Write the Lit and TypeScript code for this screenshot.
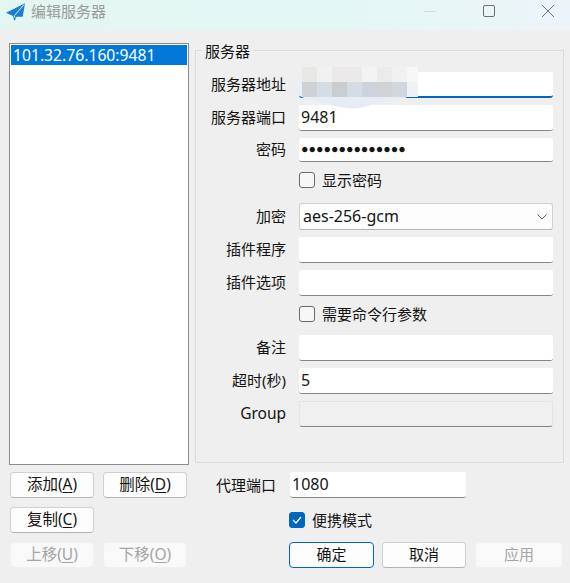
import { LitElement, html, css, svg } from 'lit';
import { customElement } from 'lit/decorators.js';

const mosaicTop = ['#e8e8e7', '#f0f1f0', '#ece9e8', '#ebeaea', '#f3f3f3', '#ebebeb', '#f1f1f1', '#f7f7f7'];
const mosaicBottom = ['#ced2d4', '#d4dce6', '#c8cdcf', '#d4dde6', '#cdd3da', '#cfd3d6', '#cfd6de', '#eef2f6'];

@customElement('app-root')
export class AppRoot extends LitElement {
  static styles = css`
    :host {
      display: block;
      width: 570px;
      height: 583px;
      overflow: hidden;
      background: #efefef;
      color: #141414;
      font-family: "Noto Sans", "Noto Sans CJK SC", sans-serif;
      font-size: 15px;
    }
    .titlebar {
      height: 30px;
      box-sizing: border-box;
      display: flex;
      align-items: center;
      padding: 0 0 9px 6px;
      background: linear-gradient(90deg, #e3f6f1 0%, #e3f7f5 60%, #edf4f9 100%);
    }
    .titlebar .logo { width: 20px; height: 20px; flex: none; }
    .titlebar .title {
      margin-left: 5px;
      color: #9a9a9a;
      flex: 1;
      line-height: 20px;
    }
    .winbtn { width: 44px; margin-left: 15px; display: flex; justify-content: center; }
    .winbtn svg { width: 14px; height: 14px; }
    .main {
      display: grid;
      grid-template-columns: 180px 369px;
      column-gap: 6px;
      padding: 13px 0 0 9px;
    }
    .list {
      height: 422px;
      box-sizing: border-box;
      border: 1px solid #8b8b90;
      background: #fff;
      padding: 1px;
    }
    .list .item {
      height: 20px;
      line-height: 20px;
      padding-left: 2px;
      background: #0078d7;
      color: #fff;
      font-size: 15.7px;
    }
    fieldset {
      position: relative;
      margin: 7px 0 0 0;
      padding: 21px 10px 0 0;
      height: 413px;
      box-sizing: border-box;
      border: 1px solid #dcdcdc;
      background: #efefef;
    }
    .legend {
      position: absolute;
      left: 6px;
      top: -9px;
      padding: 0 3px;
      line-height: 18px;
      background: #efefef;
    }
    .form {
      display: grid;
      grid-template-columns: 90px 254px;
      column-gap: 13px;
      row-gap: 7px;
      align-items: center;
    }
    .label { text-align: right; line-height: 20px; padding-bottom: 2px; white-space: nowrap; }
    .label.latin { font-size: 15.5px; }
    .input {
      height: 26px;
      box-sizing: border-box;
      background: #fff;
      border-bottom: 1px solid #858585;
      border-radius: 2px 2px 3px 3px;
      line-height: 24px;
      padding-left: 2px;
      font-size: 16px;
      overflow: hidden;
      white-space: nowrap;
    }
    .input.focus { border-bottom: 2px solid #0067c0; }
    .input.disabled { background: #f0f0f0; border: 1px solid #e4e4e4; border-bottom-color: #858585; }
    .input.pw { height: 24px; line-height: 23px; font-size: 12.4px; font-family: "Liberation Sans", sans-serif; }
    .combo {
      height: 27px;
      box-sizing: border-box;
      display: flex;
      align-items: center;
      justify-content: space-between;
      background: #fdfdfd;
      border: 1px solid #d0d0d0;
      border-bottom-color: #b4b4b4;
      border-radius: 3px;
      padding: 0 5px 2px 3px;
      font-size: 16px;
    }
    .combo svg { width: 10px; height: 6px; margin-top: 2px; }
    .gap-cb-a { margin: 3px 0 8px; }
    .gap-cb-b { margin: 3px 0 6px; }
    .check { display: flex; align-items: center; gap: 7px; line-height: 16px; height: 16px; }
    .box {
      width: 16px;
      height: 16px;
      box-sizing: border-box;
      border: 1px solid #6b6b6b;
      border-radius: 3px;
      background: #f7f7f7;
      flex: none;
      display: flex;
      align-items: center;
      justify-content: center;
    }
    .box.on { background: #0067c0; border-color: #0067c0; }
    .box svg { width: 10px; height: 8px; }
    .mosaic {
      position: absolute;
      left: 106px;
      top: 16px;
      display: grid;
      grid-template-columns: repeat(7, 15px) 11px;
      grid-auto-rows: 15px;
      filter: blur(0.4px);
    }
    .halo {
      position: absolute;
      left: 91px;
      top: 10px;
      width: 135px;
      height: 52px;
    }
    .bottom {
      display: grid;
      grid-template-columns: 180px 369px;
      column-gap: 6px;
      padding: 7px 0 0 9px;
    }
    .left-btns {
      display: grid;
      grid-template-columns: 84px 84px;
      column-gap: 9px;
      grid-auto-rows: 26px;
      row-gap: 9px;
      padding-left: 1px;
    }
    .left-btns button { font-size: 15.5px; }
    button {
      font: inherit;
      color: inherit;
      height: 26px;
      line-height: 22px;
      padding: 0 0 2px;
      box-sizing: border-box;
      background: #fdfdfd;
      border: 1px solid #d0d0d0;
      border-bottom-color: #b4b4b4;
      border-radius: 4px;
    }
    button[disabled] { background: #f9f9f9; border-color: #f0f0f0; color: #a4a4a4; }
    button.primary { border: 1px solid #0067c0; }
    u { text-underline-offset: 2px; }
    .right { display: flex; flex-direction: column; }
    .proxy { display: flex; align-items: center; height: 26px; padding-left: 21px; }
    .proxy span { padding-bottom: 2px; }
    .proxy .input { width: 176px; margin-left: 14px; }
    .portable { margin: 14px 0 0 94px; }
    .actions { display: flex; padding: 14px 0 0 94px; }
    .actions button { flex: none; }
    .actions button:nth-child(1) { width: 85px; margin-right: 8px; }
    .actions button:nth-child(2) { width: 84px; margin-right: 9px; }
    .actions button:nth-child(3) { width: 88px; }
  `;

  private label(text: string) {
    return html`<div class="label">${text}</div>`;
  }

  render() {
    const logo = svg`
      <path d="M19 2.3 L0 11.7 L7 15 L8.3 20 L10.7 15.7 L16.7 15.7 Z" fill="#1c7fd0"/>
      <path d="M18 3.6 L8.6 14.4 L8.8 17" stroke="#e3f6f1" stroke-width="0.9" fill="none"/>`;
    return html`
      <div class="titlebar">
        <svg class="logo" viewBox="0 0 20 20">${logo}</svg>
        <div class="title">编辑服务器</div>
        <div class="winbtn"><svg viewBox="0 0 14 14"><path d="M1 7.5H13" stroke="#d0dcdc" fill="none"/></svg></div>
        <div class="winbtn"><svg viewBox="0 0 14 14"><rect x="1.5" y="1.5" width="11" height="11" rx="1.5" stroke="#6f6f6f" fill="none"/></svg></div>
        <div class="winbtn"><svg viewBox="0 0 14 14"><path d="M1 1L13 13M13 1L1 13" stroke="#6f6f6f" fill="none"/></svg></div>
      </div>
      <div class="main">
        <div class="list"><div class="item">101.32.76.160:9481</div></div>
        <fieldset>
          <div class="legend">服务器</div>
          <div class="form">
            ${this.label('服务器地址')}<div class="input focus"></div>
            ${this.label('服务器端口')}<div class="input">9481</div>
            ${this.label('密码')}<div class="input pw">●●●●●●●●●●●●●●</div>
            <div></div><div class="check gap-cb-a"><span class="box"></span>显示密码</div>
            ${this.label('加密')}
            <div class="combo">aes-256-gcm
              <svg viewBox="0 0 10 6"><path d="M0.5 0.5L5 5L9.5 0.5" stroke="#5a5a5a" fill="none"/></svg>
            </div>
            ${this.label('插件程序')}<div class="input"></div>
            ${this.label('插件选项')}<div class="input"></div>
            <div></div><div class="check gap-cb-b"><span class="box"></span>需要命令行参数</div>
            ${this.label('备注')}<div class="input"></div>
            ${this.label('超时(秒)')}<div class="input">5</div>
            <div class="label latin">Group</div><div class="input disabled"></div>
          </div>
          <svg class="halo" viewBox="287 61 135 52">
            <defs>
              <linearGradient id="haloFill" x1="0" y1="0" x2="0" y2="1">
                <stop offset="0" stop-color="#f0f0f0"/>
                <stop offset="0.5" stop-color="#eaeff4"/>
                <stop offset="1" stop-color="#e4ebf3"/>
              </linearGradient>
            </defs>
            <path fill="url(#haloFill)" d="M300 66 C292 72 290 84 293 90 C296 97 312 101 330 104 C340 108 358 112 375 103 C388 101 404 101 410 95 C417 90 420 82 416 75 C413 70 409 66 404 66 Z"/>
          </svg>
          <div class="mosaic">
            ${mosaicTop.map((c) => html`<div style="background:${c}"></div>`)}
            ${mosaicBottom.map((c) => html`<div style="background:${c}"></div>`)}
          </div>
        </fieldset>
      </div>
      <div class="bottom">
        <div class="left-btns">
          <button>添加(<u>A</u>)</button>
          <button>删除(<u>D</u>)</button>
          <button>复制(<u>C</u>)</button>
          <div></div>
          <button disabled>上移(<u>U</u>)</button>
          <button disabled>下移(<u>O</u>)</button>
        </div>
        <div class="right">
          <div class="proxy"><span>代理端口</span><div class="input">1080</div></div>
          <div class="check portable">
            <span class="box on"><svg viewBox="0 0 10 8"><path d="M1 4L4 7L9 1" stroke="#fff" stroke-width="1.2" fill="none"/></svg></span>便携模式
          </div>
          <div class="actions">
            <button class="primary">确定</button>
            <button>取消</button>
            <button disabled>应用</button>
          </div>
        </div>
      </div>
    `;
  }
}
